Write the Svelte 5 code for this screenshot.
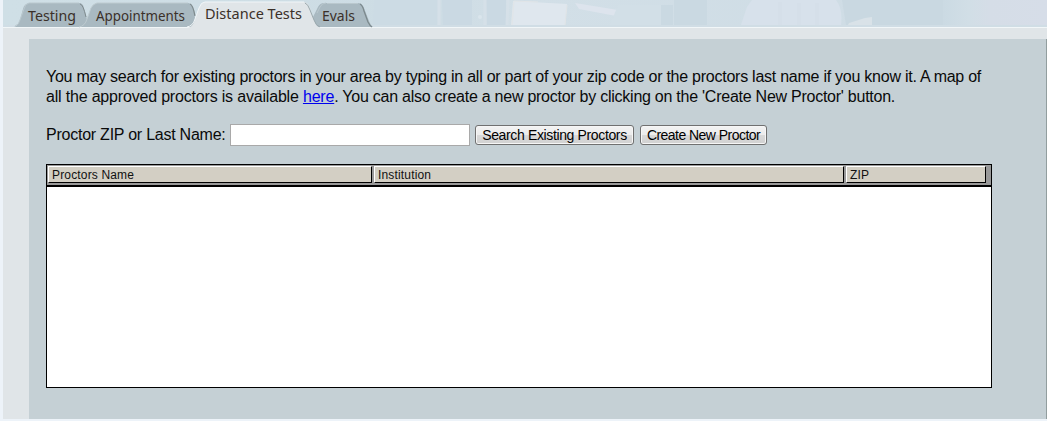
<script>
  const tabs = [
    { label: 'Testing', x: 28, y: 21, w: 48 },
    { label: 'Appointments', x: 96, y: 21, w: 89 },
    { label: 'Distance Tests', x: 205, y: 19, w: 97 },
    { label: 'Evals', x: 322, y: 21, w: 33 }
  ];
  const columns = ['Proctors Name', 'Institution', 'ZIP'];
  let query = $state('');
</script>

<div class="page">
  <header>
    <svg width="1044" height="28" viewBox="3 0 1044 28">
      <defs>
        <linearGradient id="sky" x1="0" x2="1">
          <stop offset="0" stop-color="#cfdfe6" />
          <stop offset=".4" stop-color="#cddce4" />
          <stop offset=".5" stop-color="#d2dfe7" />
          <stop offset="1" stop-color="#cddbe4" />
        </linearGradient>
        <linearGradient id="far" x1="0" x2="1">
          <stop offset="0" stop-color="#cbdae3" />
          <stop offset=".25" stop-color="#d1dee6" />
          <stop offset=".45" stop-color="#d5dde7" />
          <stop offset="1" stop-color="#d6dde8" />
        </linearGradient>
      </defs>
      <rect x="3" width="1044" height="28" fill="url(#sky)" />
      <path d="M374 0h64l-1 25h-64z" fill="#ccdbe4" />
      <path d="M442 0h30v25h-29zM486 0h20v25h-19z" fill="#cad9e3" />
      <path d="M439 0v25M485 0v25M508 0l-1 25" stroke="#d5e0e8" stroke-width="3" />
      <circle cx="480" cy="17" r="2" fill="#dae5ec" />
      <path d="M513 1l54 3-2 21h-54z" fill="#dfe7ee" />
      <path d="M512 25l2-24 24 1M565 25l2-20" stroke="#e1e5e7" fill="none" />
      <path d="M575 3l43 7-2 6-37-7z" fill="#dde4ed" />
      <path d="M618 5h43v20h-51z" fill="#d2dfe7" />
      <path d="M661 5h12v20h-12zM674 0h33v25h-33z" fill="#cad9e2" />
      <path d="M752 0h84q7 9 5 25H741l6-18z" fill="#d7e1eb" />
      <path d="M780 2v23M799 3v22M817 3v22" stroke="#d5dfe9" stroke-width="4" />
      <path d="M842 0h102v25H846z" fill="#c9d8e1" />
      <path d="M849 23l16-5 7-1v8h-24z" fill="#d9e2e8" />
      <path d="M943 0h104v25H943z" fill="url(#far)" />
      <rect x="3" y="25" width="1044" height="2" fill="#d0dde5" />
      <rect x="3" y="27" width="1044" height="1" fill="#f1f6f8" />
      <path d="M14 27q4-1 6-7l3-11q1-5 6-6h50q4 0 5 5l5 19z" fill="#a9b9c1" />
      <path d="M15 26q4-1 5-6l4-11q1-5 5-6h50" fill="none" stroke="#bac8ce" />
      <path d="M80 4q3 0 6 13" fill="none" stroke="#7e8a8d" />
      <path d="M80 27q5-1 7-8l4-11q2-4 6-5h91q4 0 6 7l2 17z" fill="#a9b9c1" />
      <path d="M79 27q6-1 8-8l4-11q2-4 6-5h91" fill="none" stroke="#becbd0" />
      <path d="M190 4q3 1 5 12" fill="none" stroke="#7e8a8d" stroke-width="1.3" />
      <path d="M316 27q-4-3-3-10l5-10q2-4 6-4h34q4 0 6 5l5 13q2 5 4 6z" fill="#a9b9c1" />
      <path d="M327 3.5h31M317 13l3-6q2-4 6-4" fill="none" stroke="#bac8ce" />
      <path d="M360 4q3 2 4 7l4 11q2 4 4 5" fill="none" stroke="#7c898d" stroke-width="1.3" />
      <path d="M187 28q6-1 8-8l4-12q2-6 6-6h99q4 0 6 6l4 12q2 7 7 8z" fill="#e0e5e8" />
      <path d="M187 27q6-1 8-8l4-11q2-6 6-6h99" fill="none" stroke="#f1f6f8" />
      <path d="M305 3q3 1 5 7l4 10q2 6 6 7" fill="none" stroke="#9aa8ad" />
      {#each tabs as tab}
        <text x={tab.x} y={tab.y} textLength={tab.w} lengthAdjust="spacingAndGlyphs">{tab.label}</text>
      {/each}
    </svg>
  </header>

  <main>
    <p><span class="first">You may search for existing proctors in your area by typing in all or part of your zip code or the proctors last name if you know it. A map of</span><br />
      <span class="second">all the approved proctors is available <a href="#map">here</a></span><span class="first">. You can also create a new proctor by clicking on the 'Create New Proctor' button.</span></p>
    <form onsubmit={(event) => event.preventDefault()}>
      <label for="query">Proctor ZIP or Last Name:</label>
      <input id="query" bind:value={query} />
      <button class="search" type="submit">Search Existing Proctors</button>
      <button class="create" type="button">Create New Proctor</button>
    </form>
    <section class="grid">
      <div class="head">
        {#each columns as column}
          <div>{column}</div>
        {/each}
      </div>
    </section>
  </main>
</div>

<style>
  :global(body) { overflow: hidden; }
  .page { box-sizing: border-box; width: 1047px; height: 421px; padding: 0 0 2px 3px; background: #edf3f9; font-family: "Liberation Sans", Arial, sans-serif; color: #0a0a0a; display: flex; flex-direction: column; }
  header { height: 28px; flex: none; }
  svg { display: block; }
  text { font: 14.7px "Noto Sans", "Open Sans", sans-serif; fill: #3b3029; }
  main { box-sizing: border-box; flex: 1; border-top: 11px solid #e0e5e8; border-left: 26px solid #e0e5e8; background: #c5d0d5; box-shadow: inset -1px 0 #929e9f; padding: 28px 55px 0 17px; }
  p { margin: 0; font-size: 16px; line-height: 20px; white-space: nowrap; }
  .first { letter-spacing: -0.25px; }
  .second { letter-spacing: -0.185px; }
  a { color: #0000ee; }
  form { display: flex; align-items: center; height: 22px; margin-top: 17px; }
  label { font-size: 16px; letter-spacing: -0.24px; white-space: nowrap; width: 184px; flex: none; }
  input { box-sizing: border-box; width: 240px; height: 22px; border: 1px solid #a9a9a9; padding: 1px 3px; background: #fff; font: 16px "Liberation Sans", sans-serif; outline: none; border-radius: 0; }
  button { box-sizing: border-box; height: 20px; padding: 0; border: 1px solid #707070; border-radius: 3px; background: linear-gradient(#f3f3f3 0%, #ececec 48%, #d9d9d9 52%, #d1d1d1 100%); box-shadow: inset 0 0 0 1px #f6f6f6; font: 14px/18px "Liberation Sans", Arial, sans-serif; color: #000; white-space: nowrap; }
  .search { width: 159px; margin-left: 5px; letter-spacing: -0.36px; }
  .create { width: 127px; margin-left: 6px; letter-spacing: -0.54px; }
  .grid { box-sizing: border-box; width: 946px; height: 224px; margin-top: 18px; border: 1px solid #000; background: #fff; }
  .head { box-sizing: border-box; height: 22px; padding: 1px 5px 2px 1px; border-bottom: 2px solid #000; background: #999; display: grid; grid-template: 17px / 324px 470px 140px; column-gap: 2px; }
  .head div { box-sizing: border-box; border: 1px solid #000; border-top-color: #fff; border-left-color: #fff; background: #d3cfc4; font-size: 12px; line-height: 17px; letter-spacing: 0.16px; padding-left: 3px; color: #111; }
</style>
